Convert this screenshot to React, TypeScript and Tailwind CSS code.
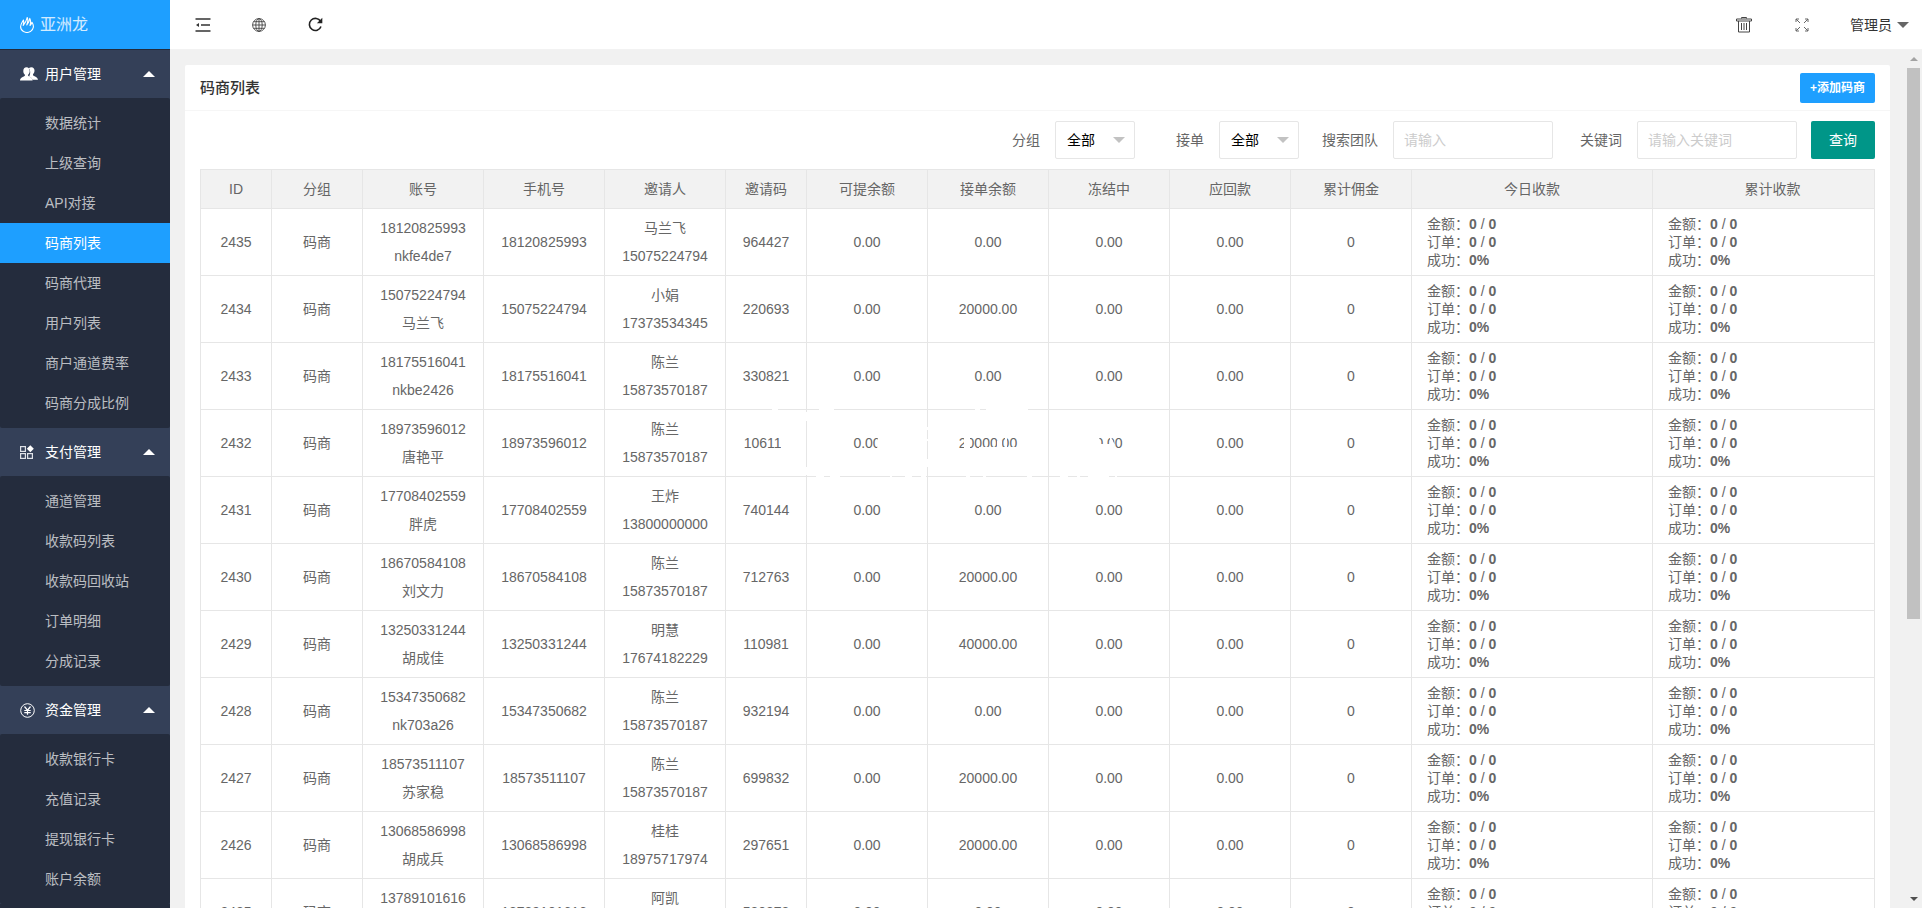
import { useState } from "react";
import type { ReactNode } from "react";

type Group = {
  title: string;
  icon: ReactNode;
  items: string[];
};

type Merchant = {
  id: number;
  account: string;
  name: string;
  inviter: string;
  inviterPhone: string;
  code: string;
  orderBalance: string;
};

const UsersIcon = () => (
  <svg width="18" height="14" viewBox="0 0 18 14" fill="#fff">
    <path d="M11.5 0.3c1.8 0 3 1.300 3 3.300 0 1.600-.7 2.900-1.500 3.600v1c.5 1 4.700 1.600 5 4.600h-5.500c-.3-1.700-2-2.700-3.600-3.400.8-.9 1.300-2.300 1.300-4.200 0-1.900-.5-3.200-1.400-4 .7-.600 1.600-.9 2.700-.9z" />
    <path d="M6.500.3c2 0 3.200 1.400 3.200 3.700 0 1.600-.7 3-1.600 3.800v1c.7 1 4.300 1.500 4.500 4.600H0c.2-3.100 4.200-3.600 4.900-4.600v-1C4 7 3.300 5.600 3.300 4 3.300 1.700 4.500.3 6.500.3z" />
  </svg>
);

const AppsIcon = () => (
  <svg width="14" height="14" viewBox="0 0 14 14" fill="none" stroke="#dfe2e8" strokeWidth="1.2">
    <rect x="0.600" y="1.600" width="4.800" height="4.800" />
    <rect x="0.600" y="8.600" width="4.800" height="4.800" />
    <rect x="7.600" y="8.600" width="4.800" height="4.800" />
    <path d="M10.300 0.200l3.500 3.500-3.500 3.500-3.500-3.500z" fill="#fff" stroke="none" />
  </svg>
);

const YenIcon = () => (
  <svg width="15" height="15" viewBox="0 0 15 15" fill="none" stroke="#fff">
    <circle cx="7.500" cy="7.500" r="6.800" strokeWidth="1" />
    <path d="M4.500 3.500l3 3.700 3-3.700M7.500 7.200v4.600M4.300 7.500h6.400M4.300 9.600h6.400" strokeWidth="1.200" />
  </svg>
);

const FlameIcon = () => (
  <svg width="14" height="16" viewBox="0 0 14 16" fill="none" stroke="#fff" strokeWidth="1.100" strokeLinejoin="round">
    <path d="M3.500 14.600C1.600 13.500.6 11.800.6 9.800.6 7.300 2.200 5.300 3.400 3c.5 1.700.4 3.400-.2 5.500C5 6.200 6.600 3.600 7.200.5c1.200 2.300.6 5-.4 7.500C8.500 6 9.500 3.800 9.800 1.400c1.300 2.300.9 4.700.2 7.100 1-.9 1.700-2 2-3.300 1.200 1.800 1.600 3.500 1.300 5.200-.3 1.800-1.300 3.200-2.900 4.200-2.100 1.100-4.800 1.100-6.900 0z" />
  </svg>
);

const groups: Group[] = [
  {
    title: "用户管理",
    icon: <UsersIcon />,
    items: ["数据统计", "上级查询", "API对接", "码商列表", "码商代理", "用户列表", "商户通道费率", "码商分成比例"],
  },
  {
    title: "支付管理",
    icon: <AppsIcon />,
    items: ["通道管理", "收款码列表", "收款码回收站", "订单明细", "分成记录"],
  },
  {
    title: "资金管理",
    icon: <YenIcon />,
    items: ["收款银行卡", "充值记录", "提现银行卡", "账户余额"],
  },
];

const merchants: Merchant[] = [
  { id: 2435, account: "18120825993", name: "nkfe4de7", inviter: "马兰飞", inviterPhone: "15075224794", code: "964427", orderBalance: "0.00" },
  { id: 2434, account: "15075224794", name: "马兰飞", inviter: "小娟", inviterPhone: "17373534345", code: "220693", orderBalance: "20000.00" },
  { id: 2433, account: "18175516041", name: "nkbe2426", inviter: "陈兰", inviterPhone: "15873570187", code: "330821", orderBalance: "0.00" },
  { id: 2432, account: "18973596012", name: "唐艳平", inviter: "陈兰", inviterPhone: "15873570187", code: "106111", orderBalance: "20000.00" },
  { id: 2431, account: "17708402559", name: "胖虎", inviter: "王炸", inviterPhone: "13800000000", code: "740144", orderBalance: "0.00" },
  { id: 2430, account: "18670584108", name: "刘文力", inviter: "陈兰", inviterPhone: "15873570187", code: "712763", orderBalance: "20000.00" },
  { id: 2429, account: "13250331244", name: "胡成佳", inviter: "明慧", inviterPhone: "17674182229", code: "110981", orderBalance: "40000.00" },
  { id: 2428, account: "15347350682", name: "nk703a26", inviter: "陈兰", inviterPhone: "15873570187", code: "932194", orderBalance: "0.00" },
  { id: 2427, account: "18573511107", name: "苏家稳", inviter: "陈兰", inviterPhone: "15873570187", code: "699832", orderBalance: "20000.00" },
  { id: 2426, account: "13068586998", name: "胡成兵", inviter: "桂桂", inviterPhone: "18975717974", code: "297651", orderBalance: "20000.00" },
  { id: 2425, account: "13789101616", name: "李小军", inviter: "阿凯", inviterPhone: "15873570187", code: "580873", orderBalance: "0.00" },
];

const columns = ["ID", "分组", "账号", "手机号", "邀请人", "邀请码", "可提余额", "接单余额", "冻结中", "应回款", "累计佣金", "今日收款", "累计收款"];

const Sidebar = () => {
  const [active, setActive] = useState("码商列表");

  return (
    <aside className="w-[170px] shrink-0 overflow-hidden bg-[#242c3d]">
      <a href="#" className="flex h-[49px] items-center gap-[6px] bg-[#1e9fff] pl-5 text-base text-white/80">
        <FlameIcon />
        亚洲龙
      </a>
      <nav className="border-t border-[#232b3b]">
        {groups.map((group) => (
          <div key={group.title} className="bg-[#344058]">
            <button type="button" className="flex h-12 w-full items-center pr-[15px] text-white">
              <span className="flex w-[45px] pl-5">{group.icon}</span>
              {group.title}
              <span className="ml-auto border-x-6 border-b-6 border-x-transparent border-b-white" />
            </button>
            <ul className="rounded-xs bg-[#242c3d] py-[5px]">
              {group.items.map((item) => (
                <li key={item}>
                  <a
                    href="#"
                    onClick={() => setActive(item)}
                    className={
                      item === active
                        ? "block h-10 bg-[#1e9fff] pl-[45px] leading-10 text-white"
                        : "block h-10 pl-[45px] leading-10 text-white/70"
                    }
                  >
                    {item}
                  </a>
                </li>
              ))}
            </ul>
          </div>
        ))}
      </nav>
    </aside>
  );
};

const Header = () => (
  <header className="flex h-[50px] shrink-0 items-center border-b border-[#f2f2f2] bg-white pl-[5px] pr-[13px] text-[#333]">
    <button type="button" aria-label="收起菜单" className="flex w-14 justify-center">
      <svg width="16" height="14" viewBox="0 0 16 14" fill="none" stroke="#333" strokeWidth="1.300">
        <path d="M0.500 1h15M6 7h9M0.500 13h15" />
        <path d="M4 5v4L1 7z" fill="#333" stroke="none" />
      </svg>
    </button>
    <button type="button" aria-label="网站" className="flex w-14 justify-center">
      <svg width="14" height="14" viewBox="0 0 14 14" fill="none" stroke="#444" strokeWidth="0.900">
        <circle cx="7" cy="7" r="6.400" />
        <ellipse cx="7" cy="7" rx="3.200" ry="6.400" />
        <path d="M7 .6v12.800M.6 7h12.800M1.500 3.700h11M1.500 10.300h11" />
      </svg>
    </button>
    <button type="button" aria-label="刷新" className="flex w-14 justify-center">
      <svg width="15" height="15" viewBox="0 0 15 15" fill="none" stroke="#222" strokeWidth="1.600">
        <path d="M12.600 4.500A6 6 0 1 0 13 9.500" />
        <path d="M14.300 0.800v5.400H8.900z" fill="#222" stroke="none" />
      </svg>
    </button>
    <button type="button" aria-label="清除缓存" className="ml-auto flex w-[60px] justify-center">
      <svg width="16" height="16" viewBox="0 0 16 16" fill="none" stroke="#444">
        <path d="M5.500 1.500v-1h5v1" />
        <path d="M0.500 4V2h15v2z" />
        <path d="M2.500 4v11h11V4" />
        <path d="M5.500 6v7M8 6v7M10.500 6v7" />
      </svg>
    </button>
    <button type="button" aria-label="全屏" className="flex w-14 justify-center">
      <svg width="14" height="14" viewBox="0 0 14 14" fill="none" stroke="#666">
        <path d="M1 4V1h3M10 1h3v3M13 10v3h-3M4 13H1v-3" />
        <path d="M1 1l4 4M13 1L9 5M13 13L9 9M1 13l4-4" />
      </svg>
    </button>
    <button type="button" className="flex items-center gap-[5px] pl-5">
      管理员
      <span className="border-x-6 border-t-6 border-x-transparent border-t-[#666]" />
    </button>
  </header>
);

const SelectField = ({ id, label }: { id: string; label: string }) => (
  <div className="mr-[10px] flex items-center">
    <label htmlFor={id} className="w-[74px] pr-[15px] text-right">
      {label}
    </label>
    <div className="relative">
      <select
        id={id}
        className="block h-[38px] w-20 appearance-none rounded-xs border border-[#e6e6e6] bg-white pl-[11px] text-black"
      >
        <option>全部</option>
      </select>
      <span className="pointer-events-none absolute top-4 right-[10px] border-x-6 border-t-6 border-x-transparent border-t-[#c2c2c2]" />
    </div>
  </div>
);

const Filters = () => (
  <form className="flex items-center justify-end" onSubmit={(e) => e.preventDefault()}>
    <SelectField id="group" label="分组" />
    <SelectField id="accept" label="接单" />
    <label htmlFor="team" className="w-[84px] pr-[15px] text-right">
      搜索团队
    </label>
    <input
      id="team"
      placeholder="请输入"
      className="mr-[10px] h-[38px] w-40 rounded-xs border border-[#e6e6e6] px-[10px] placeholder:text-[#ccc]"
    />
    <label htmlFor="keyword" className="w-[74px] pr-[15px] text-right">
      关键词
    </label>
    <input
      id="keyword"
      placeholder="请输入关键词"
      className="mr-[14px] h-[38px] w-40 rounded-xs border border-[#e6e6e6] px-[10px] placeholder:text-[#ccc]"
    />
    <button type="submit" className="h-[38px] w-16 rounded-xs bg-[#009688] text-white">
      查询
    </button>
  </form>
);

const Receipts = () => (
  <td className="border border-[#e6e6e6] px-[15px] text-left leading-[18px]">
    <p>
      金额：<b>0</b> / <b>0</b>
    </p>
    <p>
      订单：<b>0</b> / <b>0</b>
    </p>
    <p>
      成功：<b>0%</b>
    </p>
  </td>
);

// white brush marks lying over the middle of the table
const Watermark = () => (
  <svg
    className="pointer-events-none absolute top-[236px] left-[570px]"
    width="350"
    height="80"
    viewBox="0 0 350 80"
    fill="#fff"
    aria-hidden="true"
  >
    <path d="M2 2h6v5H2zM49 2h15v5H49zM205 2h5v5h-5zM216 2h42v5h-42z" />
    <path d="M46 68h8v6h-8zM60 68h10v6H60zM120 68h2v6h-2zM135 68h7v6h-7zM151 68h5v6h-5zM196 68h4v6h-4zM213 68h3v6h-3zM257 68h5v6h-5z" />
    <path d="M290 68h8v6h-8zM307 68h3v6h-3zM318 68h21v6h-21zM345 68h2v6h-2z" />
    <path d="M34 7h4v9h-4zM34 62h4v8h-4zM155 22h4v3h-4zM155 34h4v2h-4zM155 54h4v8h-4z" />
    <path d="M11 30h9v16h-9zM108 30h10v16h-11z" />
    <path d="M194 30h6v16h-6zM209 42h60v5h-60zM227 36h5v10h-5zM235 30h2v16h-2z" />
    <path d="M324 30h5l1 9 5 0-4 8h-7zM332 39h8v-9l5 10-4 7h-9z" />
  </svg>
);

const MerchantTable = () => {
  const cell = "border border-[#e6e6e6] py-[5px]";

  return (
    <div className="relative mt-[10px]">
      <table className="w-full table-fixed border-collapse text-center leading-7">
        <colgroup>
          <col className="w-[71px]" />
          <col className="w-[91px]" />
          <col className="w-[121px]" />
          <col className="w-[121px]" />
          <col className="w-[121px]" />
          <col className="w-[81px]" />
          <col className="w-[121px]" />
          <col className="w-[121px]" />
          <col className="w-[121px]" />
          <col className="w-[121px]" />
          <col className="w-[121px]" />
          <col className="w-[241px]" />
          <col />
        </colgroup>
        <thead>
          <tr className="bg-[#f2f2f2]">
            {columns.map((name) => (
              <th key={name} className="border border-[#e6e6e6] py-[5px] font-normal last:pl-[18px]">
                {name}
              </th>
            ))}
          </tr>
        </thead>
        <tbody>
          {merchants.map((m) => (
            <tr key={m.id}>
              <td className={cell}>{m.id}</td>
              <td className={cell}>码商</td>
              <td className={cell}>
                <p>{m.account}</p>
                <p>{m.name}</p>
              </td>
              <td className={cell}>{m.account}</td>
              <td className={cell}>
                <p>{m.inviter}</p>
                <p>{m.inviterPhone}</p>
              </td>
              <td className={cell}>{m.code}</td>
              <td className={cell}>0.00</td>
              <td className={cell}>{m.orderBalance}</td>
              <td className={cell}>0.00</td>
              <td className={cell}>0.00</td>
              <td className={cell}>0</td>
              <Receipts />
              <Receipts />
            </tr>
          ))}
        </tbody>
      </table>
      <Watermark />
    </div>
  );
};

const Scrollbar = () => (
  <div className="flex w-[17px] shrink-0 flex-col items-center bg-[#f1f1f1]">
    <span className="my-[7px] border-x-4 border-b-4 border-x-transparent border-b-[#a3a3a3]" />
    <div className="flex w-[13px] flex-1 flex-col">
      <div className="basis-[67%] bg-[#c1c1c1]" />
    </div>
    <span className="my-[7px] border-x-4 border-t-4 border-x-transparent border-t-[#505050]" />
  </div>
);

export default function App() {
  return (
    <div className="flex h-screen overflow-hidden font-['Liberation_Sans','Noto_Sans_CJK_SC',sans-serif] text-sm text-[#666]">
      <Sidebar />
      <div className="flex min-w-0 flex-1 flex-col">
        <Header />
        <div className="flex min-h-0 flex-1 bg-[#f1f1f1]">
          <main className="min-w-0 flex-1 overflow-hidden p-[15px]">
            <section className="rounded-xs bg-white">
              <div className="flex h-[46px] items-center justify-between border-b border-[#f6f6f6] px-[15px]">
                <h1 className="text-[15px] font-medium text-[#333]">码商列表</h1>
                <button type="button" className="h-[30px] rounded-xs bg-[#1e9fff] px-[10px] text-xs font-bold text-white">
                  +添加码商
                </button>
              </div>
              <div className="px-[15px] py-[10px]">
                <Filters />
                <MerchantTable />
              </div>
            </section>
          </main>
          <Scrollbar />
        </div>
      </div>
    </div>
  );
}
